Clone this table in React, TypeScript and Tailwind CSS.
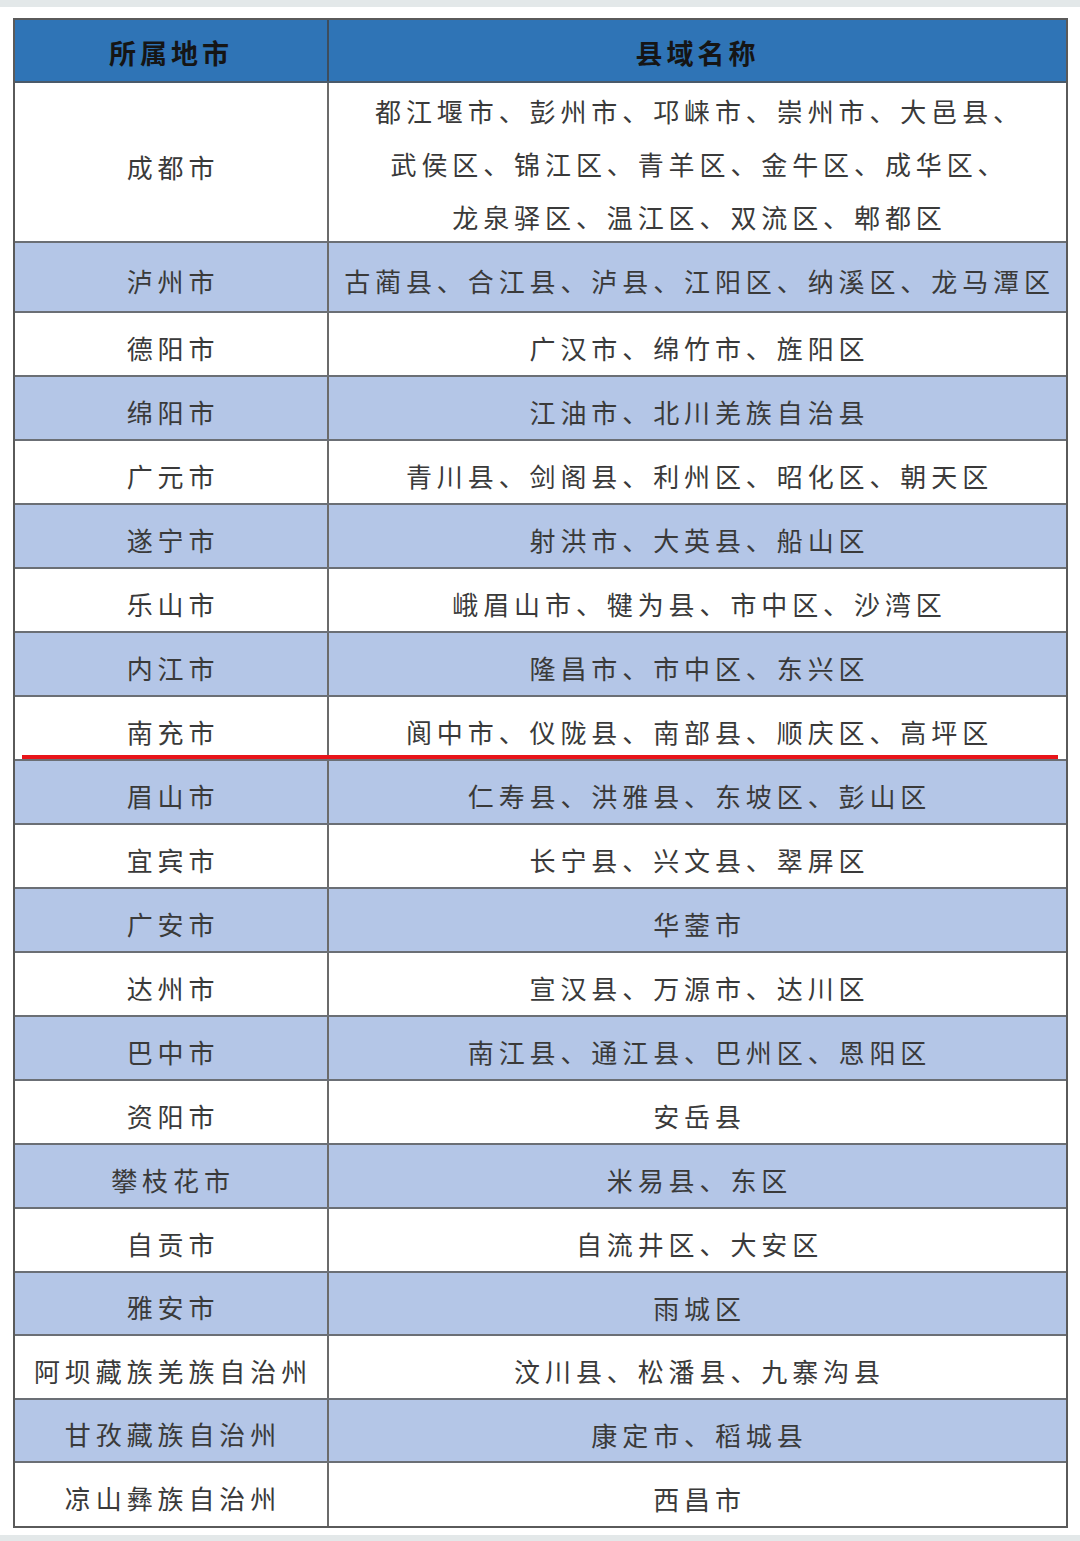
const rows: { city: string; lines: string[]; h: number }[] = [
  { city: "成都市", lines: ["都江堰市、彭州市、邛崃市、崇州市、大邑县、", "武侯区、锦江区、青羊区、金牛区、成华区、", "龙泉驿区、温江区、双流区、郫都区"], h: 160 },
  { city: "泸州市", lines: ["古蔺县、合江县、泸县、江阳区、纳溪区、龙马潭区"], h: 70 },
  { city: "德阳市", lines: ["广汉市、绵竹市、旌阳区"], h: 64 },
  { city: "绵阳市", lines: ["江油市、北川羌族自治县"], h: 64 },
  { city: "广元市", lines: ["青川县、剑阁县、利州区、昭化区、朝天区"], h: 64 },
  { city: "遂宁市", lines: ["射洪市、大英县、船山区"], h: 64 },
  { city: "乐山市", lines: ["峨眉山市、犍为县、市中区、沙湾区"], h: 64 },
  { city: "内江市", lines: ["隆昌市、市中区、东兴区"], h: 64 },
  { city: "南充市", lines: ["阆中市、仪陇县、南部县、顺庆区、高坪区"], h: 64 },
  { city: "眉山市", lines: ["仁寿县、洪雅县、东坡区、彭山区"], h: 64 },
  { city: "宜宾市", lines: ["长宁县、兴文县、翠屏区"], h: 64 },
  { city: "广安市", lines: ["华蓥市"], h: 64 },
  { city: "达州市", lines: ["宣汉县、万源市、达川区"], h: 64 },
  { city: "巴中市", lines: ["南江县、通江县、巴州区、恩阳区"], h: 64 },
  { city: "资阳市", lines: ["安岳县"], h: 64 },
  { city: "攀枝花市", lines: ["米易县、东区"], h: 64 },
  { city: "自贡市", lines: ["自流井区、大安区"], h: 64 },
  { city: "雅安市", lines: ["雨城区"], h: 63 },
  { city: "阿坝藏族羌族自治州", lines: ["汶川县、松潘县、九寨沟县"], h: 64 },
  { city: "甘孜藏族自治州", lines: ["康定市、稻城县"], h: 63 },
  { city: "凉山彝族自治州", lines: ["西昌市"], h: 63 },
]

export default function App() {
  return (
    <div
      className="w-[1080px] h-[1541px] bg-white flex flex-col text-[#3a3a3a]"
      style={{ fontFamily: '"Noto Sans CJK SC", "Noto Sans", sans-serif' }}
    >
      <div className="h-[7px] bg-[#e3e8e9]" />
      <div className="flex-1 pt-[11px] pl-[13px]">
        <div className="relative w-[1055px] border-2 border-[#5a5a5a]">
          <div className="grid grid-cols-[314px_1fr] h-[63px] bg-[#2f74b6] border-b-2 border-[#4a5a6a] text-[#151515] font-bold text-[27px] tracking-[4px]">
            <div className="flex items-center justify-center pt-[5px] border-r-2 border-[#3d4d5d]">所属地市</div>
            <div className="flex items-center justify-center pt-[5px]">县域名称</div>
          </div>
          {rows.map((r, i) => (
            <div
              key={i}
              className={`grid grid-cols-[314px_1fr] text-[26px] tracking-[4.9px] ${i % 2 === 1 ? "bg-[#b4c6e7]" : "bg-white"} ${i < rows.length - 1 ? "border-b-2 border-[#6b6f75]" : ""}`}
              style={{ height: r.h }}
            >
              <div className="flex items-center justify-center pt-[6px] pl-[4px] border-r-2 border-[#6b6b6b] whitespace-nowrap">{r.city}</div>
              <div className={`flex flex-col items-center justify-center pl-[4px] leading-[53px] whitespace-nowrap ${r.lines.length > 1 ? "pt-[1px]" : "pt-[7px]"}`}>
                {r.lines.map((l, j) => (
                  <div key={j}>{l}</div>
                ))}
              </div>
            </div>
          ))}
          <div className="absolute left-[7px] w-[1036px] top-[735px] h-[4px] bg-[#e8141a]" />
        </div>
      </div>
      <div className="h-[6px] bg-[#e3e8e9]" />
    </div>
  )
}
